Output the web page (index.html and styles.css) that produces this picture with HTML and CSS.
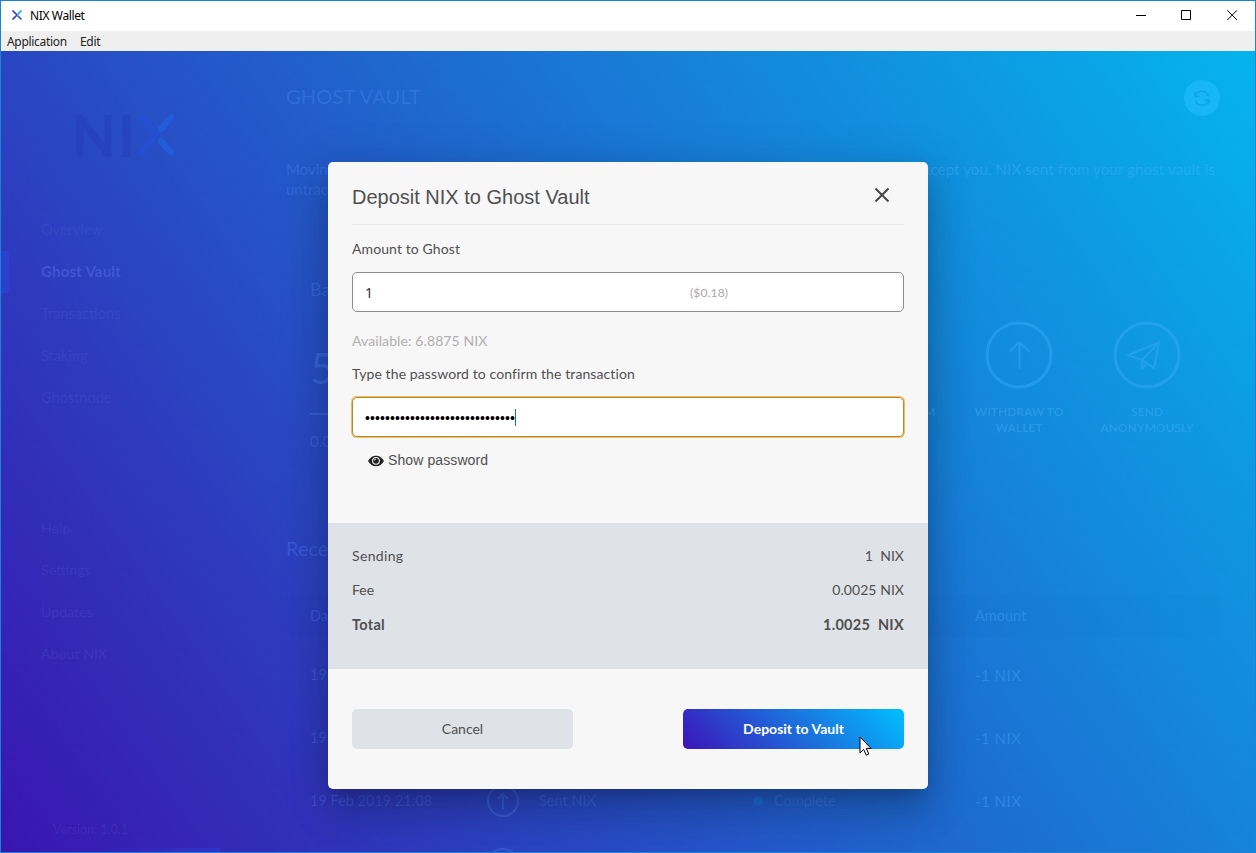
FILE: index.html
```
<!DOCTYPE html>
<html lang="en">
<head>
<meta charset="utf-8">
<title>NIX Wallet</title>
<link rel="stylesheet" href="styles.css">
</head>
<body>
<div class="window">
  <header class="titlebar">
    <svg class="app-icon" width="12" height="12" viewBox="0 0 12 12" fill="none" stroke-width="1.7"><path d="M1.5 1.5 6 6M1.5 10.5 6 6" stroke="#3038c8"/><path d="M10.500 1.500 6.500 5.500" stroke="#10a8ee"/><path d="M6.500 6.500 10.500 10.500" stroke="#2456d2"/></svg>
    <span class="app-name">NIX Wallet</span>
    <svg class="win-controls" width="104" height="12" viewBox="0 0 104 12" fill="none" stroke="#000"><path d="M0 6.500h10M45.500 1.500h9v9h-9zM91.300 1.300l9.700 9.700M101 1.300l-9.700 9.700"/></svg>
  </header>
  <nav class="menubar"><span class="menu-app">Application</span><span class="menu-edit">Edit</span></nav>

  <div class="app">
    <aside class="sidebar">
      <div class="logo"><span class="logo-text">NI</span><svg width="40" height="46" viewBox="0 0 40 46" fill="none" stroke-width="6.500" stroke-linecap="round"><path d="M6 5 20 22 6 40" stroke="#244fd0"/><path d="M35 5 25 17M25 29l10 11" stroke="#225cd6"/></svg></div>
      <ul class="nav">
        <li>Overview</li>
        <li class="active">Ghost Vault</li>
        <li>Transactions</li>
        <li>Staking</li>
        <li>Ghostnode</li>
      </ul>
      <ul class="nav nav-bottom">
        <li>Help</li>
        <li>Settings</li>
        <li>Updates</li>
        <li>About NIX</li>
      </ul>
      <div class="version">Version: 1.0.1</div>
      <div class="update-btn"></div>
    </aside>

    <main class="main">
      <div class="page-head">
        <h1>GHOST VAULT</h1>
        <span class="refresh"><svg width="18" height="18" viewBox="0 0 18 18" fill="none" stroke-width="1.5"><path d="M2 3V7.500H6.500M2.500 7.200A6.700 6.700 0 0 1 15.500 7.500M16 15.500V11H11.500M15.500 11.200A6.700 6.700 0 0 1 2.500 11"/></svg></span>
      </div>
      <div class="intro">
        <div class="intro-line"><span>Movin</span><span class="intro-end">except you. NIX sent from your ghost vault is</span></div>
        <div>untrac</div>
      </div>
      <section class="balance">
        <div class="balance-info">
          <div class="balance-label">Bal</div>
          <div class="balance-value">5</div>
          <div class="balance-sub">0.0</div>
        </div>
        <div class="actions">
          <div class="action"><svg width="68" height="68" viewBox="0 0 68 68"><circle cx="34" cy="34" r="32"/></svg><p>DEPOSIT FROM<br>WALLET</p></div>
          <div class="action"><svg width="68" height="68" viewBox="0 0 68 68"><circle cx="34" cy="34" r="32"/><path d="M34.500 47V21M25.500 30l9-9 9 9"/></svg><p>WITHDRAW TO<br>WALLET</p></div>
          <div class="action"><svg width="68" height="68" viewBox="0 0 68 68"><circle cx="34" cy="34" r="32"/><path d="M15 34 46 21.500 41 47 29 39zM29 39 46 21.500M29 39v8.500l5-5"/></svg><p>SEND<br>ANONYMOUSLY</p></div>
        </div>
      </section>
      <h2>Recent</h2>
      <div class="table">
        <div class="row thead"><span>Date</span><span></span><span></span><span></span><span class="th-amount">Amount</span></div>
        <div class="row"><span>19 Feb 2019 21:08</span><span></span><span></span><span></span><span class="amt">-1 NIX</span></div>
        <div class="row"><span>19 Feb 2019 21:08</span><span></span><span></span><span></span><span class="amt">-1 NIX</span></div>
        <div class="row"><span>19 Feb 2019 21:08</span><svg width="32" height="32" viewBox="0 0 32 32"><circle cx="16" cy="16" r="15"/><path d="M16 24V9M11 14l5-5 5 5"/></svg><span>Sent NIX</span><span class="status"><i></i>Complete</span><span class="amt">-1 NIX</span></div>
        <div class="row"><span></span><svg width="32" height="32" viewBox="0 0 32 32"><circle cx="16" cy="16" r="15"/></svg></div>
      </div>
    </main>
  </div>

  <div class="dialog">
    <div class="dialog-body">
      <div class="dialog-head"><span class="dialog-title">Deposit NIX to Ghost Vault</span><svg class="close" width="16" height="16" viewBox="0 0 16 16"><path d="M1.500 1.500l13 13M14.500 1.500l-13 13" stroke="#444" stroke-width="1.900"/></svg></div>
      <div class="label l-amount">Amount to Ghost</div>
      <div class="field amount"><span class="value">1</span><span class="fiat">($0.18)</span></div>
      <div class="label available">Available: 6.8875 NIX</div>
      <div class="label l-pass">Type the password to confirm the transaction</div>
      <div class="field password"><span class="dots">••••••••••••••••••••••••••••••</span><i class="caret"></i></div>
      <div class="show"><svg width="16" height="12" viewBox="0 0 16 12"><path fill="#222" d="M0 6C2 2.500 4.700.8 8 .8S14 2.500 16 6c-2 3.500-4.700 5.200-8 5.200S2 9.500 0 6z"/><circle cx="8" cy="5.800" r="3.900" fill="#f7f7f7"/><circle cx="8" cy="5.800" r="2.900" fill="#222"/><path d="M6.300 5.600A1.800 1.800 0 0 1 8 4" fill="none" stroke="#f7f7f7" stroke-width=".9"/></svg><span>Show password</span></div>
    </div>
    <div class="summary">
      <div class="sum-row"><span class="s-send">Sending</span><span>1&nbsp; NIX</span></div>
      <div class="sum-row"><span>Fee</span><span>0.0025 NIX</span></div>
      <div class="sum-row total"><span>Total</span><span>1.0025&nbsp; NIX</span></div>
    </div>
    <div class="buttons"><span class="btn cancel">Cancel</span><span class="btn deposit">Deposit to Vault</span></div>
  </div>
  <svg class="cursor" width="13" height="21" viewBox="0 0 13 21"><path d="M1 1v16l3.700-3.600 2.500 5.700 2.600-1.100-2.500-5.600H12z" fill="#fff" stroke="#000" stroke-width="1"/></svg>
</div>
</body>
</html>
```
FILE: styles.css
```
* { box-sizing: border-box; }
body { margin: 0; overflow: hidden; }
h1, h2, p, ul { margin: 0; padding: 0; font-weight: 400; }
.window {
  position: relative;
  display: flex;
  flex-direction: column;
  width: 1256px;
  height: 853px;
  border: 1px solid #1883d7;
  overflow: hidden;
  font: 14px/20px Lato, sans-serif;
}
.titlebar { display: flex; align-items: center; height: 30px; flex: none; padding: 0 15px 2px 10px; background: #fff; }
.app-icon { margin-right: 7px; }
.app-name { padding-top: 2px; font: 12px/16px "Noto Sans", sans-serif; letter-spacing: -0.37px; color: #000; }
.win-controls { margin-left: auto; }
.menubar { display: flex; height: 20px; flex: none; padding-left: 6px; background: #efefef; font: 12px/21px "Noto Sans", sans-serif; color: #222; }
.menu-app { width: 73px; letter-spacing: -0.3px; }
.menu-edit { letter-spacing: -0.3px; }

.app {
  display: grid;
  grid-template-columns: 249px 1fr;
  flex: 1;
  min-height: 0;
  overflow: hidden;
  background: linear-gradient(55deg, #3a15b0 0%, #05b4ec 100%);
  color: rgba(90, 150, 255, .28);
}
.sidebar { display: flex; flex-direction: column; color: rgba(105, 120, 220, .17); }
.logo { display: flex; margin: 61px 0 0 71px; height: 46px; }
.logo-text { width: 64px; font-size: 57px; line-height: 46px; font-weight: 700; letter-spacing: 2px; color: rgba(34, 58, 185, .4); white-space: nowrap; }
.nav { list-style: none; margin-top: 51px; font-size: 14.5px; }
.nav li { height: 42px; line-height: 41px; padding-left: 40px; }
.nav .active { padding-left: 32px; border-left: 8px solid rgba(40, 70, 225, .5); line-height: 40px; font-size: 15px; letter-spacing: .2px; font-weight: 700; color: rgba(110, 135, 255, .33); }
.nav-bottom { margin-top: 88px; font-size: 14.2px; }
.version { margin: 145px 0 0 52px; height: 20px; font-size: 12.5px; }
.update-btn { width: 179px; height: 36px; flex: none; margin: 8px 0 0 40px; background: linear-gradient(90deg, transparent 30%, rgba(40, 70, 230, .4)); }

.main { padding: 29px 35px 0 36px; }
.page-head { display: flex; justify-content: space-between; height: 36px; }
h1 { font-size: 20px; line-height: 33px; letter-spacing: .2px; }
.refresh { display: flex; width: 36px; height: 36px; align-items: center; justify-content: center; border-radius: 50%; background: rgba(35, 190, 255, .6); }
.refresh svg { stroke: rgba(0, 145, 220, .45); }
.intro { margin-top: 43px; font-size: 15px; line-height: 20px; }
.intro-line { display: flex; justify-content: space-between; margin-right: 5px; white-space: nowrap; }
.intro-end, .th-amount, .amt, .action p { color: rgba(85, 185, 255, .32); }
.intro-end { letter-spacing: .12px; }
.balance { display: flex; justify-content: space-between; height: 250px; margin-top: 57px; padding: 23px 9px 0 24px; }
.balance-label { font-size: 18px; line-height: 20px; }
.balance-value { height: 61px; margin-top: 55px; border-bottom: 2px solid; font-size: 43px; line-height: 28px; }
.balance-info { width: 200px; }
.balance-sub { margin-top: 16px; font-size: 15px; }
.actions { display: flex; padding-top: 42px; }
.action { width: 128px; text-align: center; font-size: 12px; line-height: 16px; }
.action svg { display: block; margin: 0 auto 15px; }
.action circle, .action path { fill: none; stroke: rgba(60, 175, 255, .4); stroke-width: 3; stroke-linejoin: round; stroke-linecap: round; }
.action path { stroke-width: 2.200; }
.action p { font-weight: 700; }
h2 { margin-top: 32px; font-size: 20px; line-height: 20px; }
.table { margin-top: 37px; }
.row { display: grid; grid-template-columns: 177px 52px 219px 217px 1fr; align-items: center; height: 63px; padding-left: 24px; font-size: 14.5px; }
.thead { height: 42px; margin-bottom: 6px; background: rgba(0, 60, 130, .02); }
.row svg { fill: none; stroke: currentColor; stroke-width: 2; }
.amt { font-size: 15px; letter-spacing: .5px; }
.status { margin-left: -5px; }
.status i { display: inline-block; width: 10px; height: 10px; margin-right: 11px; border-radius: 50%; background: rgba(20, 130, 240, .4); }

.dialog {
  position: absolute;
  left: 327px;
  top: 161px;
  width: 600px;
  height: 627px;
  border-radius: 5px;
  background: #f7f7f7;
  overflow: visible;
  color: #505050;
  box-shadow: 0 11px 15px -7px rgba(0,0,0,.2), 0 24px 38px 3px rgba(0,0,0,.14), 0 9px 46px 8px rgba(0,0,0,.12);
}
.dialog-body { height: 361px; padding: 0 24px; }
.dialog-head { display: flex; justify-content: space-between; height: 63px; padding: 22px 14px 0 0; border-bottom: 1px solid #e6e8e8; }
.dialog-title { font: 20px/26px "Liberation Sans", Arial, sans-serif; }
.close { margin-top: 3px; }
.label { height: 20px; line-height: 20px; letter-spacing: .1px; white-space: nowrap; }
.l-amount { margin-top: 14px; }
.field { display: flex; align-items: center; height: 40px; border: 1px solid #8c8c8c; border-radius: 5px; background: #fff; }
.amount { margin-top: 13px; padding-left: 12px; }
.value { width: 325px; padding-top: 1px; font: 14px/20px "Noto Sans", sans-serif; color: #333; }
.fiat { font-size: 12px; letter-spacing: .15px; color: #a8a8a8; padding-top: 2px; }
.available { margin-top: 19px; color: #b0b0b0; }
.l-pass { margin-top: 13px; }
.password { margin-top: 13px; padding-left: 12px; border-color: #b8892e; box-shadow: 0 0 0 1px #eebd5e; }
.dots { width: 150px; padding-top: 2px; font: 14px/20px "Liberation Sans", Arial, sans-serif; letter-spacing: .1px; color: #000; white-space: nowrap; }
.caret { width: 1px; height: 17px; background: #1070c0; }
.show { display: flex; align-items: center; gap: 4px; margin: 13px 0 0 16px; height: 20px; font: 14px/20px "Liberation Sans", Arial, sans-serif; letter-spacing: .1px; }
.show svg { margin-top: 2px; }
.summary { height: 146px; padding: 16px 24px 0; background: #dfe2e7; }
.sum-row { display: flex; justify-content: space-between; height: 34px; line-height: 34px; letter-spacing: .05px; }
.s-send { letter-spacing: .35px; }
.total { font-size: 14.5px; line-height: 35px; letter-spacing: .3px; font-weight: 700; }
.buttons { display: flex; justify-content: space-between; padding: 40px 24px 0; }
.btn { width: 221px; height: 40px; border-radius: 5px; line-height: 40px; text-align: center; }
.cancel { background: #dfe2e7; }
.deposit { background: linear-gradient(45deg, #3c14b8, #00c0ff); color: #fff; font-weight: 700; }
.cursor { position: absolute; left: 858px; top: 735px; }
```
